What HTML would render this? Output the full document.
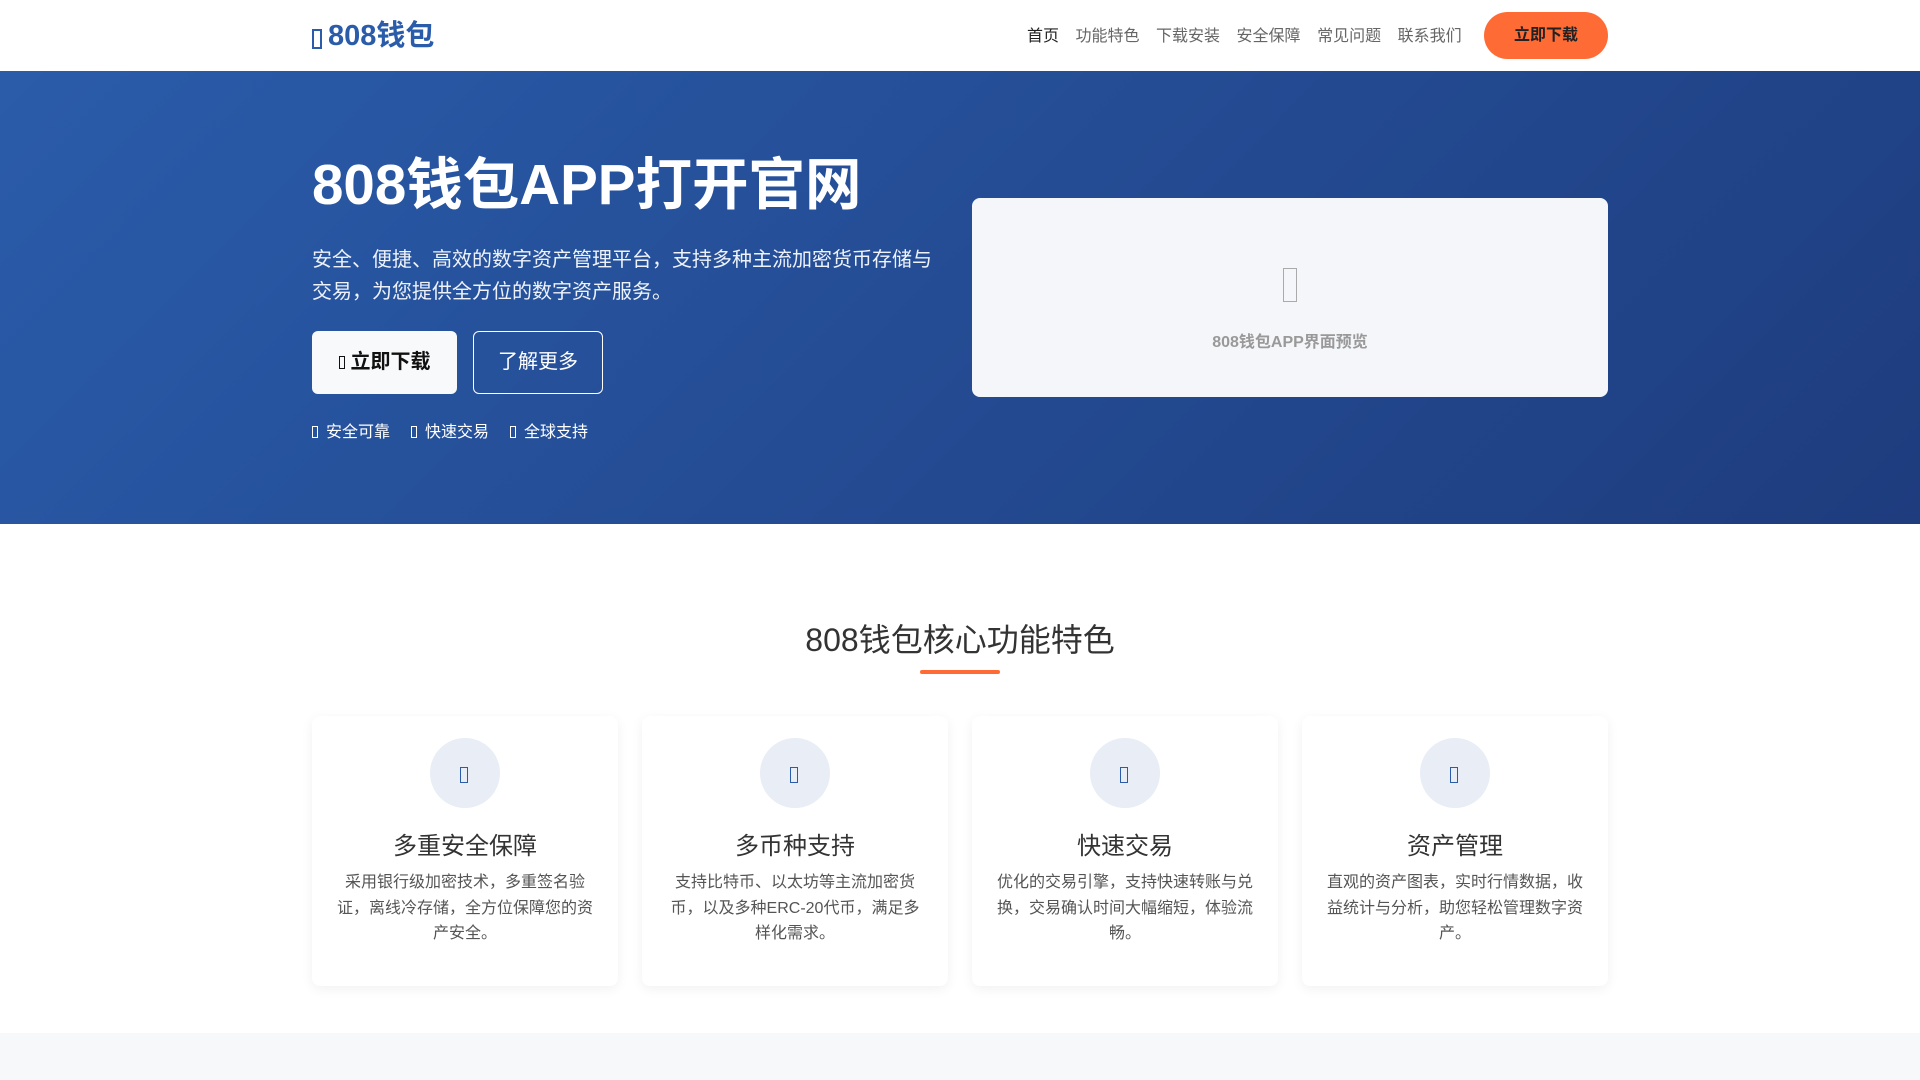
<!DOCTYPE html>
<html><head><meta charset="utf-8"><style>
*{margin:0;padding:0;box-sizing:border-box}
body{width:1920px;height:1080px;overflow:hidden;font-family:"Liberation Sans","Noto Sans CJK SC",sans-serif;background:#fff;color:#333}
.box{display:inline-block;width:.45em;height:.8em;border:1px solid currentColor;vertical-align:-0.05em;margin-right:.3em}
header{height:71px;position:relative;background:#fff;box-shadow:0 1px 4px rgba(0,0,0,.06)}
.logo{position:absolute;left:312px;top:16px;font-size:29px;font-weight:bold;color:#2a5caa;line-height:40px}
.logo .box{border-width:2px;width:10px;height:20px;vertical-align:-4px;margin-right:6px}
nav{position:absolute;left:1027px;top:26px;font-size:16px;color:#666;line-height:22px}
nav span{margin-right:16.5px}
nav span:first-child{color:#222}
.hbtn{position:absolute;left:1484px;top:12px;width:124px;height:47px;border-radius:24px;background:#ff6b35;color:#222;font-weight:bold;font-size:16px;line-height:47px;text-align:center}
.hero{position:absolute;top:71px;left:0;width:1920px;height:453px;background:linear-gradient(135deg,#2a5caa 0%,#1e3c7e 100%)}
h1{position:absolute;left:312px;top:150px;font-size:56.5px;color:#fff;font-weight:bold;line-height:70px;white-space:nowrap}
.desc{position:absolute;left:312px;top:244px;width:625px;font-size:20px;line-height:32px;color:#eef2fa}
.b1{position:absolute;left:312px;top:331px;width:145px;height:63px;background:#f8f9fb;border-radius:6px;color:#111;font-weight:bold;font-size:20px;line-height:63px;text-align:center}
.b2{position:absolute;left:473px;top:331px;width:130px;height:63px;border:1px solid #fff;border-radius:6px;color:#fff;font-size:20px;line-height:61px;text-align:center}
.feats{position:absolute;left:312px;top:422px;font-size:16px;color:#fff;line-height:22px}
.feats span{margin-right:21px}
.feats .box{width:6px;height:12px;margin-right:8px}
.prev{position:absolute;left:972px;top:198px;width:636px;height:199px;background:#f5f6fa;border-radius:8px;text-align:center;color:#999}
.prev .ic{width:14px;height:34px;border:1.5px solid #aaa;margin:70px auto 0}
.prev p{font-size:16px;font-weight:bold;margin-top:26px;color:#999}
.st{position:absolute;top:616px;left:0;width:1920px;text-align:center;font-size:32px;color:#333;line-height:48px}
.ul{position:absolute;left:920px;top:670px;width:80px;height:4px;background:#ff6b35;border-radius:2px}
.card{position:absolute;top:716px;width:306px;height:270px;background:#fff;border-radius:8px;box-shadow:0 3px 12px rgba(0,0,0,.06);text-align:center}
.circ{width:70px;height:70px;border-radius:50%;background:#e8edf6;margin:22px auto 0;position:relative}
.circ i{position:absolute;left:30px;top:29px;width:8px;height:16px;border:1.5px solid #2a5caa}
.card h3{font-size:24px;font-weight:normal;color:#333;margin-top:22px;line-height:34px}
.card p{font-size:16px;color:#555;line-height:25.5px;padding:0 24px;margin-top:6px}
.gray{position:absolute;top:1033px;left:0;width:1920px;height:47px;background:#f7f8fa}
</style></head><body>
<header>
<div class="logo"><span class="box"></span>808钱包</div>
<nav><span>首页</span><span>功能特色</span><span>下载安装</span><span>安全保障</span><span>常见问题</span><span>联系我们</span></nav>
<div class="hbtn">立即下载</div>
</header>
<div class="hero">
</div>
<h1>808钱包APP打开官网</h1>
<div class="desc">安全、便捷、高效的数字资产管理平台，支持多种主流加密货币存储与交易，为您提供全方位的数字资产服务。</div>
<div class="b1"><span class="box" style="width:6px;height:13px;border-width:1px"></span>立即下载</div>
<div class="b2">了解更多</div>
<div class="feats"><span><i class="box"></i>安全可靠</span><span><i class="box"></i>快速交易</span><span><i class="box"></i>全球支持</span></div>
<div class="prev"><div class="ic"></div><p>808钱包APP界面预览</p></div>
<div class="st">808钱包核心功能特色</div>
<div class="ul"></div>
<div class="card" style="left:312px"><div class="circ"><i></i></div><h3>多重安全保障</h3><p>采用银行级加密技术，多重签名验证，离线冷存储，全方位保障您的资产安全。</p></div>
<div class="card" style="left:642px"><div class="circ"><i></i></div><h3>多币种支持</h3><p>支持比特币、以太坊等主流加密货币，以及多种ERC-20代币，满足多样化需求。</p></div>
<div class="card" style="left:972px"><div class="circ"><i></i></div><h3>快速交易</h3><p>优化的交易引擎，支持快速转账与兑换，交易确认时间大幅缩短，体验流畅。</p></div>
<div class="card" style="left:1302px"><div class="circ"><i></i></div><h3>资产管理</h3><p>直观的资产图表，实时行情数据，收益统计与分析，助您轻松管理数字资产。</p></div>
<div class="gray"></div>
</body></html>
